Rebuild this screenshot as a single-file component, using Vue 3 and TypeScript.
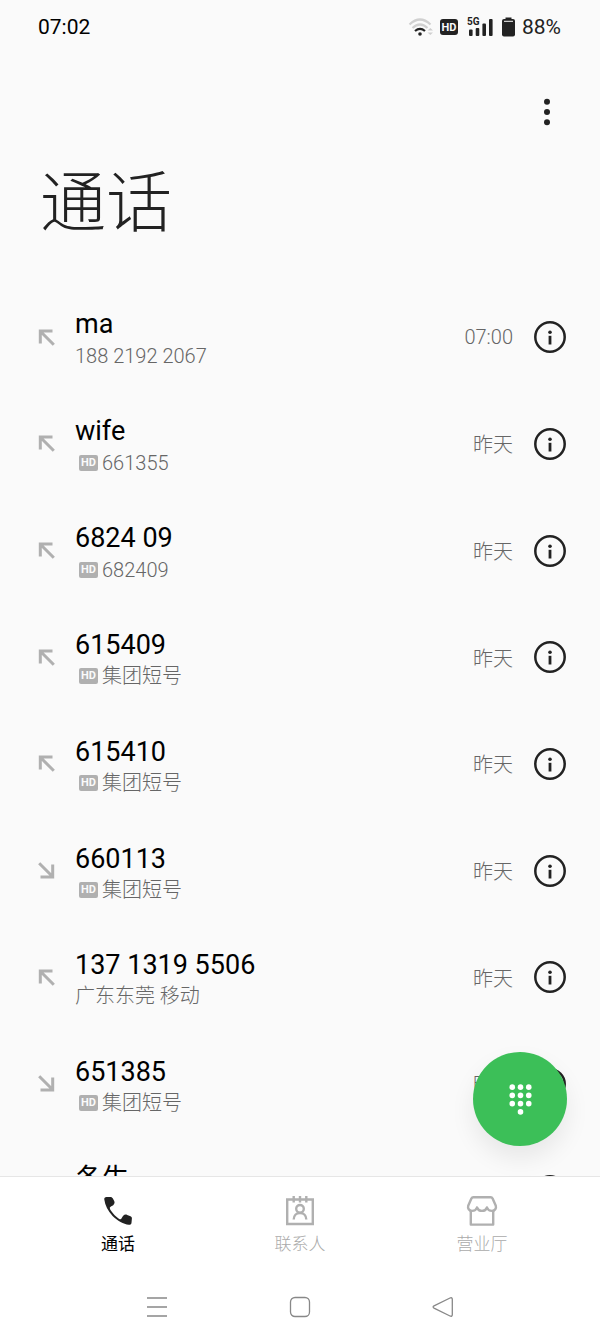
<script setup lang="ts">
import { ref } from 'vue'

interface Call {
  id: number
  name: string
  detail: string
  hd: boolean
  outgoing: boolean
  time: string
}

const calls: Call[] = [
  { id: 1, name: 'ma', detail: '188 2192 2067', hd: false, outgoing: false, time: '07:00' },
  { id: 2, name: 'wife', detail: '661355', hd: true, outgoing: false, time: '昨天' },
  { id: 3, name: '6824 09', detail: '682409', hd: true, outgoing: false, time: '昨天' },
  { id: 4, name: '615409', detail: '集团短号', hd: true, outgoing: false, time: '昨天' },
  { id: 5, name: '615410', detail: '集团短号', hd: true, outgoing: false, time: '昨天' },
  { id: 6, name: '660113', detail: '集团短号', hd: true, outgoing: true, time: '昨天' },
  { id: 7, name: '137 1319 5506', detail: '广东东莞 移动', hd: false, outgoing: false, time: '昨天' },
  { id: 8, name: '651385', detail: '集团短号', hd: true, outgoing: true, time: '昨天' },
  { id: 9, name: '冬生', detail: '', hd: false, outgoing: false, time: '' },
]

const tabs = [
  { id: 'calls', label: '通话' },
  { id: 'contacts', label: '联系人' },
  { id: 'service', label: '营业厅' },
]
const active = ref('calls')

const isLatin = (s: string): boolean => /^[\d\s]+$/.test(s)

const keyDots: [number, number][] = [
  [4, 4], [12, 4], [20, 4],
  [4, 12], [12, 12], [20, 12],
  [4, 20], [12, 20], [20, 20],
  [12, 28],
]
</script>

<template>
  <div class="phone">
    <header class="status">
      <span class="clock">07:02</span>
      <div class="indicators">
        <svg class="wifi" width="26" height="20" viewBox="0 0 26 20" fill="none">
          <path d="M1.500 7.500Q12 -2.500 22.500 7.500" stroke="#d0d0d0" stroke-width="2.200" />
          <path d="M4.500 11Q12 4 19.500 11" stroke="#d0d0d0" stroke-width="2.200" />
          <path d="M7 14Q12 9.800 17 14" stroke="#222" stroke-width="2.200" />
          <circle cx="12" cy="17" r="1.800" fill="#222" />
          <path d="M19.500 13.500L22.300 11L25 13.500ZM19.500 15.500L22.300 18L25 15.500Z" fill="#cfcfcf" />
        </svg>
        <span class="hd hd-status">HD</span>
        <div class="signal">
          <span class="net">5G</span>
          <svg width="27" height="20" viewBox="0 0 27 20" fill="#222">
            <rect x="2" y="12.500" width="3.600" height="6.500" rx="1" />
            <rect x="8.700" y="11" width="3.600" height="8" rx="1" />
            <rect x="15.400" y="6.500" width="3.600" height="12.500" rx="1" />
            <rect x="22" y="2" width="3.600" height="17" rx="1" />
          </svg>
        </div>
        <svg class="battery" width="13" height="20" viewBox="0 0 13 20" fill="#222">
          <path d="M3.500 .5h6v2h-6z" />
          <rect y="2" width="13" height="17.500" rx="2" />
          <path d="M2 4.300h9" stroke="#fafafa" stroke-width="1" />
        </svg>
        <span class="percent">88%</span>
      </div>
    </header>

    <div class="toolbar">
      <button class="plain more" type="button" aria-label="更多">
        <svg width="8" height="28" viewBox="0 0 8 28" fill="#222">
          <circle cx="4" cy="3.700" r="3" />
          <circle cx="4" cy="14" r="3" />
          <circle cx="4" cy="24.300" r="3" />
        </svg>
      </button>
    </div>

    <h1 class="title">通话</h1>

    <main class="body">
      <ul class="list">
        <li v-for="call in calls" :key="call.id" class="row">
          <svg class="arrow" :class="{ out: call.outgoing }" width="17" height="17" viewBox="0 0 17 17" fill="none" stroke="#b0b0b0" stroke-width="3">
            <path d="M14.500 2H2.300V14.500M2.300 2.300L15.800 15.800" />
          </svg>
          <div class="who">
            <span class="name">{{ call.name }}</span>
            <span class="detail" :class="{ latin: isLatin(call.detail) }">
              <span v-if="call.hd" class="hd hd-call">HD</span>{{ call.detail }}
            </span>
          </div>
          <span class="time">{{ call.time }}</span>
          <button class="plain info" type="button" :aria-label="`${call.name} 详情`">
            <svg width="34" height="34" viewBox="0 0 34 34">
              <circle cx="17" cy="17" r="14.700" fill="none" stroke="#222" stroke-width="2.500" />
              <circle cx="17" cy="12.200" r="1.800" fill="#222" />
              <path d="M17 15.800V24.500" stroke="#222" stroke-width="2.800" />
            </svg>
          </button>
        </li>
      </ul>
      <button class="fab" type="button" aria-label="拨号键盘">
        <svg width="25" height="33" viewBox="0 0 24 32" fill="#fff">
          <circle v-for="([x, y], i) in keyDots" :key="i" :cx="x" :cy="y" r="2.700" />
        </svg>
      </button>
    </main>

    <nav class="tabs">
      <button
        v-for="tab in tabs"
        :key="tab.id"
        type="button"
        class="plain tab"
        :class="{ active: tab.id === active }"
        @click="active = tab.id"
      >
        <svg v-if="tab.id === 'calls'" width="32" height="32" viewBox="0 0 32 32" fill="#222">
          <path d="M2.300 4.600C2 3 3 2.200 4.500 2.100L8.300 2C9.600 2 10.300 2.500 10.900 3.600L12.300 6.300C13 7.800 12.300 9.100 11.200 10.300C10.300 11.200 8.200 11.600 7.800 12.600C7.500 14.200 9.600 16.900 11.800 19.200C14.100 21.600 17 24.400 18.600 24.200C19.700 23.900 20.100 21.700 21.200 20.700C22.400 19.600 23.800 19.300 25.200 20L28.500 21.300C29.600 21.800 30 22.500 29.900 23.600L29.500 27.700C29.300 29.300 28.300 29.900 26.800 29.700C21.500 29 15.500 25.800 10.600 20.900C5.900 16.100 3 10.200 2.300 4.600Z" />
        </svg>
        <svg v-else-if="tab.id === 'contacts'" width="32" height="32" viewBox="0 0 32 32" fill="none" stroke="#b0b0b0" stroke-width="2.400">
          <path d="M3.200 4.500H28.800V29H3.200ZM9.700 1V7.500M16 1V7.500M22.300 1V7.500" />
          <circle cx="16" cy="13.800" r="3.800" />
          <path d="M9.700 24.500C9.700 20.500 12.200 18 16 18S22.300 20.500 22.300 24.500" />
        </svg>
        <svg v-else width="32" height="32" viewBox="0 0 32 32" fill="none" stroke="#b0b0b0" stroke-width="2.400" stroke-linejoin="round">
          <path d="M7.300 2.300H24.700Q26 2.300 26.600 3.500L29.800 10.800C30.500 13.200 29 15.900 26 15.900C23.700 15.900 21.700 14.700 21 12.500C20.200 14.700 18.500 15.900 16 15.900S11.800 14.700 11 12.500C10.300 14.700 8.300 15.900 6 15.900C3 15.900 1.500 13.200 2.200 10.800L5.400 3.500Q6 2.300 7.300 2.300Z" />
          <path d="M4.800 15.500V29.600H27.200V15.500" />
        </svg>
        <span>{{ tab.label }}</span>
      </button>
    </nav>

    <footer class="sysnav">
      <button class="plain" type="button" aria-label="最近任务">
        <svg width="22" height="22" viewBox="0 0 22 22" stroke="#888" stroke-width="1.300"><path d="M1 2H21M1 11H21M1 20H21" /></svg>
      </button>
      <button class="plain" type="button" aria-label="主屏幕">
        <svg width="22" height="22" viewBox="0 0 22 22" fill="none" stroke="#888" stroke-width="1.300"><rect x="1.500" y="1.500" width="19" height="19" rx="4.500" /></svg>
      </button>
      <button class="plain" type="button" aria-label="返回">
        <svg width="22" height="22" viewBox="0 0 22 22" fill="none" stroke="#888" stroke-width="1.300"><path d="M2 9.900L18 2Q20.200 1.200 20.300 3.200V18.800Q20.200 20.800 18 20L2 12.100Q.2 11 2 9.900Z" /></svg>
      </button>
    </footer>
  </div>
</template>

<style>
body {
  background: #fafafa;
}
</style>

<style scoped>
.phone {
  display: flex;
  flex-direction: column;
  height: 100vh;
  overflow: hidden;
  background: #fafafa;
  color: #000;
  font-family: Roboto, "Noto Sans CJK SC", sans-serif;
}

.plain {
  display: flex;
  align-items: center;
  justify-content: center;
  padding: 0;
  border: 0;
  background: none;
  color: inherit;
  font: inherit;
  cursor: pointer;
}

.status {
  display: flex;
  flex: none;
  align-items: center;
  justify-content: space-between;
  height: 54px;
  padding: 0 39px 0 38px;
  color: #222;
  font-size: 21px;
}

.clock {
  color: #000;
}

.indicators {
  display: flex;
  align-items: center;
}

.hd {
  display: inline-flex;
  flex: none;
  align-items: center;
  justify-content: center;
  border-radius: 3px;
  color: #fafafa;
  font-weight: 700;
}

.hd-status {
  width: 18px;
  height: 16px;
  margin: 0 9px 0 6px;
  background: #222;
  font-size: 11px;
}

.signal {
  position: relative;
  display: flex;
  margin-right: 8px;
}

.net {
  position: absolute;
  top: -1px;
  left: 0;
  font-size: 10px;
  font-weight: 700;
  line-height: 12px;
}

.battery {
  margin-right: 7px;
}

.toolbar {
  display: flex;
  flex: none;
  justify-content: flex-end;
  padding: 34px 33px 0;
}

.more {
  width: 40px;
  height: 48px;
}

.title {
  flex: none;
  margin: 0;
  padding: 18px 40px 30px;
  color: #222;
  font-size: 66px;
  font-weight: 300;
  line-height: 100px;
}

.body {
  position: relative;
  flex: 1;
  min-height: 0;
  overflow: hidden;
}

.list {
  display: grid;
  grid-auto-rows: 1fr;
  min-height: 960px;
  margin: 0;
  padding: 0;
  list-style: none;
}

.row {
  display: flex;
  align-items: center;
  padding: 0 33px 0 38px;
}

.arrow {
  flex: none;
  margin-right: 20px;
}

.arrow.out {
  transform: rotate(180deg);
}

.who {
  display: flex;
  flex: 1;
  flex-direction: column;
  min-width: 0;
  padding-top: 2px;
}

.name {
  font-size: 27px;
  line-height: 36px;
}

.detail {
  display: flex;
  align-items: center;
  min-height: 26px;
  color: #666;
  font-size: 20px;
  font-weight: 300;
  line-height: 26px;
}

.detail.latin {
  line-height: 28px;
}

.hd-call {
  width: 19px;
  height: 16px;
  margin: 0 4px;
  border-radius: 2px;
  background: #b0b0b0;
  font-size: 11px;
  line-height: 16px;
}

.time {
  margin-right: 20px;
  color: #666;
  font-size: 20px;
  font-weight: 300;
}

.fab {
  position: absolute;
  right: 33px;
  bottom: 30px;
  display: flex;
  align-items: center;
  justify-content: center;
  width: 94px;
  height: 94px;
  padding: 0;
  border: 0;
  border-radius: 50%;
  background: #3cbf58;
  box-shadow: 0 12px 24px rgba(0, 0, 0, 0.08);
  cursor: pointer;
}

.tabs {
  display: flex;
  flex: none;
  height: 93px;
  padding: 0 27px;
  border-top: 1px solid #e6e6e6;
  background: #fff;
}

.tab {
  flex: 1;
  flex-direction: column;
  gap: 4px;
  padding-top: 4px;
  color: #aaa;
  font-size: 17px;
  font-weight: 300;
  line-height: 26px;
}

.tab.active {
  color: #000;
  font-weight: 400;
}

.sysnav {
  display: flex;
  flex: none;
  height: 73px;
  padding: 0 85px;
  background: #fff;
}

.sysnav .plain {
  flex: 1;
}
</style>
